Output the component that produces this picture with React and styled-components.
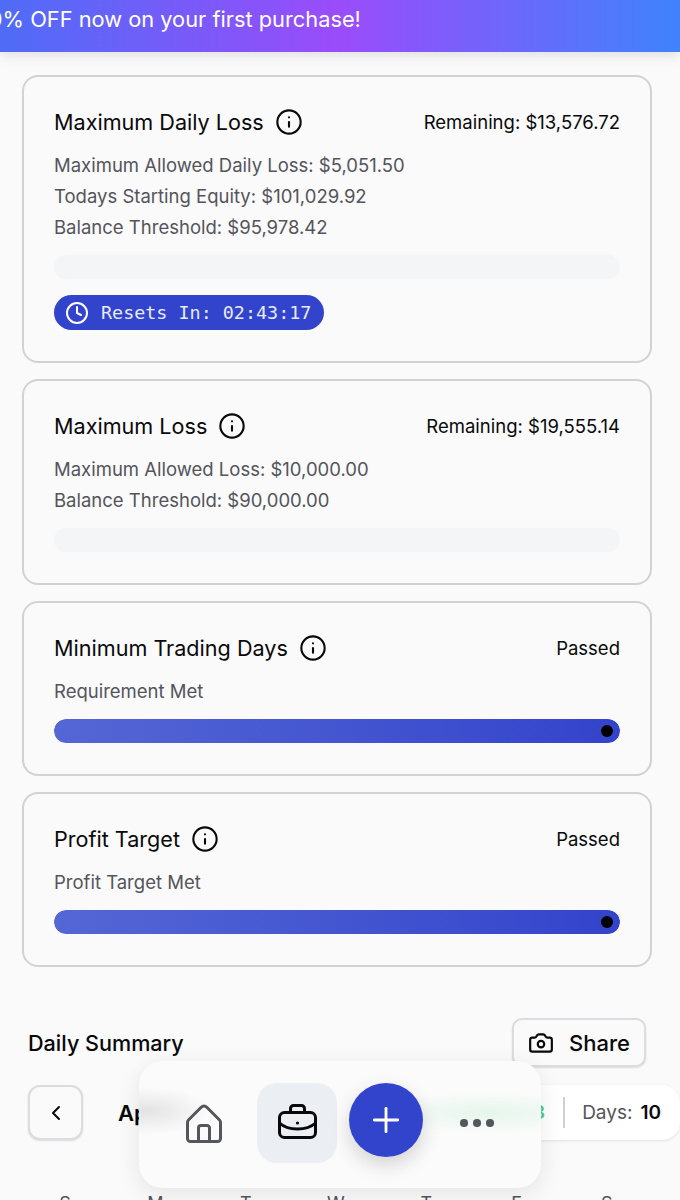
import styled, { createGlobalStyle } from 'styled-components'
import { Info, Clock, Camera, ChevronLeft, Plus } from 'lucide-react'

const GlobalStyle = createGlobalStyle`
  html, body {
    margin: 0;
    height: 1200px;
    overflow: hidden;
    background: #fafafa;
    font-family: Inter, "Liberation Sans", sans-serif;
    color: #09090b;
  }
  * { box-sizing: border-box; }
`

const cards = [
  {
    title: 'Maximum Daily Loss',
    status: 'Remaining: $13,576.72',
    lines: ['Maximum Allowed Daily Loss: $5,051.50', 'Todays Starting Equity: $101,029.92', 'Balance Threshold: $95,978.42'],
    full: false,
    resets: '02:43:17',
  },
  {
    title: 'Maximum Loss',
    status: 'Remaining: $19,555.14',
    lines: ['Maximum Allowed Loss: $10,000.00', 'Balance Threshold: $90,000.00'],
    full: false,
  },
  { title: 'Minimum Trading Days', status: 'Passed', lines: ['Requirement Met'], full: true },
  { title: 'Profit Target', status: 'Passed', lines: ['Profit Target Met'], full: true },
]

const weekdays = ['S', 'M', 'T', 'W', 'T', 'F', 'S']

function HomeIcon() {
  return (
    <svg width="36" height="39" viewBox="0 0 36 39" fill="none" stroke="#55565c" strokeWidth="3" strokeLinejoin="round" strokeLinecap="round">
      <path d="M1.5 34.5V18.5a4 4 0 0 1 1.2-2.8L15.2 3.2a4 4 0 0 1 5.6 0L33.3 15.7a4 4 0 0 1 1.2 2.8V34.5a3 3 0 0 1-3 3H4.5a3 3 0 0 1-3-3Z" />
      <path d="M12.5 37.5V24a2.500 2.500 0 0 1 2.500-2.500h6a2.500 2.500 0 0 1 2.500 2.500V37.5" />
    </svg>
  )
}

function BriefcaseIcon() {
  return (
    <svg width="39" height="35" viewBox="0 0 39 35" fill="none" stroke="#09090b" strokeWidth="3" strokeLinejoin="round" strokeLinecap="round">
      <rect x="1.5" y="8.5" width="36" height="25" rx="5" />
      <path d="M12.5 8.5V4.5a3 3 0 0 1 3-3h8a3 3 0 0 1 3 3v4" />
      <path d="M1.500 19C10 27 29 27 37.500 19" />
      <circle cx="19.500" cy="19" r="1.600" fill="#09090b" stroke="none" />
    </svg>
  )
}

function App() {
  return (
    <>
      <GlobalStyle />
      <Banner>
        <BannerText>10% OFF now on your first purchase!</BannerText>
      </Banner>
      <CardList>
        {cards.map((card) => (
          <Card key={card.title}>
            <CardHead>
              <CardTitle>
                {card.title}
                <Info size={28} strokeWidth={1.8} />
              </CardTitle>
              <Status>{card.status}</Status>
            </CardHead>
            <Lines>
              {card.lines.map((line) => <Line key={line}>{line}</Line>)}
            </Lines>
            <Track>
              {card.full && <Fill><Dot /></Fill>}
            </Track>
            {card.resets && (
              <ResetPill>
                <Clock size={24} strokeWidth={2} />
                Resets In: {card.resets}
              </ResetPill>
            )}
          </Card>
        ))}
      </CardList>
      <Summary>
        <SummaryHead>
          <SummaryTitle>Daily Summary</SummaryTitle>
          <ShareButton><Camera size={26} strokeWidth={2} />Share</ShareButton>
        </SummaryHead>
        <MonthRow>
          <BackButton><ChevronLeft size={24} strokeWidth={2} /></BackButton>
          <MonthName>April</MonthName>
          <StatsPill>
            <Profit>$9,555.13</Profit>
            <Divider />
            <DaysLabel>Days:</DaysLabel>
            <DaysValue>10</DaysValue>
          </StatsPill>
        </MonthRow>
        <Weekdays>
          {weekdays.map((day, i) => <span key={i}>{day}</span>)}
        </Weekdays>
      </Summary>
      <BottomNav>
        <NavButton><HomeIcon /></NavButton>
        <NavButton $active><BriefcaseIcon /></NavButton>
        <AddButton><Plus size={40} strokeWidth={1.7} /></AddButton>
        <MoreDots><i /><i /><i /></MoreDots>
      </BottomNav>
    </>
  )
}

const Banner = styled.div`
  height: 52px;
  background: linear-gradient(90deg, #4f6cf7 0%, #9a4cfb 50%, #3f83fb 100%);
  box-shadow: 0 4px 12px rgba(0, 0, 0, 0.1);
  overflow: hidden;
  display: flex;
  align-items: center;
  padding-bottom: 14px;
`

const BannerText = styled.div`
  margin-left: -20px;
  white-space: nowrap;
  color: #fff;
  font-size: 21.8px;
`

const CardList = styled.div`
  display: flex;
  flex-direction: column;
  gap: 16px;
  margin: 23px 28px 0 22px;
`

const Card = styled.section`
  background: #fafafa;
  border: 2px solid #d2d2d4;
  border-radius: 16px;
  padding: 30px 30px 31px;
`

const CardHead = styled.div`
  display: flex;
  justify-content: space-between;
  align-items: center;
  height: 30px;
`

const CardTitle = styled.h3`
  margin: 0;
  display: flex;
  align-items: center;
  gap: 11px;
  font-size: 21.6px;
  font-weight: 400;
`

const Status = styled.span`
  font-size: 18.5px;
`

const Lines = styled.div`
  margin-top: 13px;
`

const Line = styled.div`
  font-size: 18.5px;
  line-height: 31px;
  color: #54545c;
`

const Track = styled.div`
  margin-top: 12px;
  height: 24px;
  border-radius: 12px;
  background: #f4f5f7;
  overflow: hidden;
`

const Fill = styled.div`
  height: 100%;
  width: 100%;
  border-radius: 12px;
  background: linear-gradient(90deg, #5567d5, #3344cc);
  display: flex;
  align-items: center;
  justify-content: flex-end;
  padding-right: 7px;
`

const Dot = styled.span`
  width: 12px;
  height: 12px;
  border-radius: 50%;
  background: #000;
`

const ResetPill = styled.div`
  margin-top: 16px;
  width: 270px;
  height: 35px;
  border-radius: 18px;
  background: #3344cc;
  color: #e8ebff;
  display: flex;
  align-items: center;
  gap: 12px;
  padding-left: 11px;
  font-family: "DejaVu Sans Mono", monospace;
  font-size: 18.4px;
  svg { color: #fff; }
`

const Summary = styled.div`
  margin: 51px 0 0 28px;
`

const SummaryHead = styled.div`
  display: flex;
  justify-content: space-between;
  align-items: center;
  margin-right: 34px;
`

const SummaryTitle = styled.h2`
  margin: 0;
  font-size: 21.6px;
  font-weight: 500;
`

const ShareButton = styled.button`
  width: 134px;
  height: 49px;
  display: flex;
  align-items: center;
  justify-content: center;
  gap: 15px;
  background: #fafafa;
  border: 2px solid #dcdcde;
  border-radius: 10px;
  box-shadow: 0 1px 2px rgba(0, 0, 0, 0.12);
  font-family: inherit;
  font-size: 22px;
  font-weight: 500;
  color: #09090b;
`

const MonthRow = styled.div`
  display: flex;
  align-items: center;
  margin-top: 18px;
`

const BackButton = styled.button`
  width: 55px;
  height: 55px;
  display: flex;
  align-items: center;
  justify-content: center;
  padding: 0;
  background: #fafafa;
  border: 2px solid #dcdcde;
  border-radius: 12px;
  box-shadow: 0 1px 2px rgba(0, 0, 0, 0.12);
  color: #09090b;
`

const MonthName = styled.span`
  margin-left: 35px;
  font-size: 22px;
  font-weight: 600;
`

const StatsPill = styled.div`
  margin-left: auto;
  height: 55px;
  width: 260px;
  display: flex;
  align-items: center;
  justify-content: flex-end;
  padding-right: 19px;
  background: #fff;
  border-radius: 18px;
  box-shadow: 0 1px 3px rgba(0, 0, 0, 0.1);
`

const Profit = styled.span`
  color: #4ad07c;
  font-size: 19px;
  font-weight: 600;
`

const Divider = styled.span`
  width: 2px;
  height: 31px;
  margin: 0 17px 0 18px;
  background: #cfcfd2;
`

const DaysLabel = styled.span`
  font-size: 19px;
  color: #54545c;
`

const DaysValue = styled.span`
  margin-left: 8px;
  font-size: 19px;
  font-weight: 600;
`

const Weekdays = styled.div`
  margin: 53px 0 0 -8px;
  width: 632px;
  display: grid;
  grid-template-columns: repeat(7, 1fr);
  justify-items: center;
  font-size: 18px;
  color: #54545c;
`

// frosted panel: the smudges stand in for the text blurred behind it
const BottomNav = styled.nav`
  position: fixed;
  left: 139px;
  top: 1061px;
  width: 402px;
  height: 127px;
  border-radius: 24px;
  background:
    radial-gradient(ellipse 62px 24px at 8px 50px, rgba(110, 110, 110, 0.17), transparent),
    radial-gradient(ellipse 110px 21px at 350px 52px, rgba(74, 208, 124, 0.12), transparent),
    #fbfbfb;
  box-shadow: 0 6px 24px rgba(0, 0, 0, 0.09);
  display: flex;
  align-items: flex-start;
  padding: 22px 0 0 25px;
`

const NavButton = styled.div`
  width: 80px;
  height: 80px;
  margin-right: 13px;
  padding-bottom: ${(p) => (p.$active ? '3px' : '0')};
  display: flex;
  align-items: center;
  justify-content: center;
  border-radius: 20px;
  background: ${(p) => (p.$active ? '#ebeef3' : 'transparent')};
`

const AddButton = styled.div`
  width: 74px;
  height: 74px;
  margin-left: -1px;
  border-radius: 50%;
  background: #3344cc;
  color: #fff;
  display: flex;
  align-items: center;
  justify-content: center;
  box-shadow: 0 8px 20px rgba(0, 0, 0, 0.16);
`

const MoreDots = styled.div`
  margin: 36px 0 0 37px;
  display: flex;
  gap: 5.5px;
  i {
    width: 7.5px;
    height: 7.5px;
    border-radius: 50%;
    background: #55565c;
  }
`

export default App
